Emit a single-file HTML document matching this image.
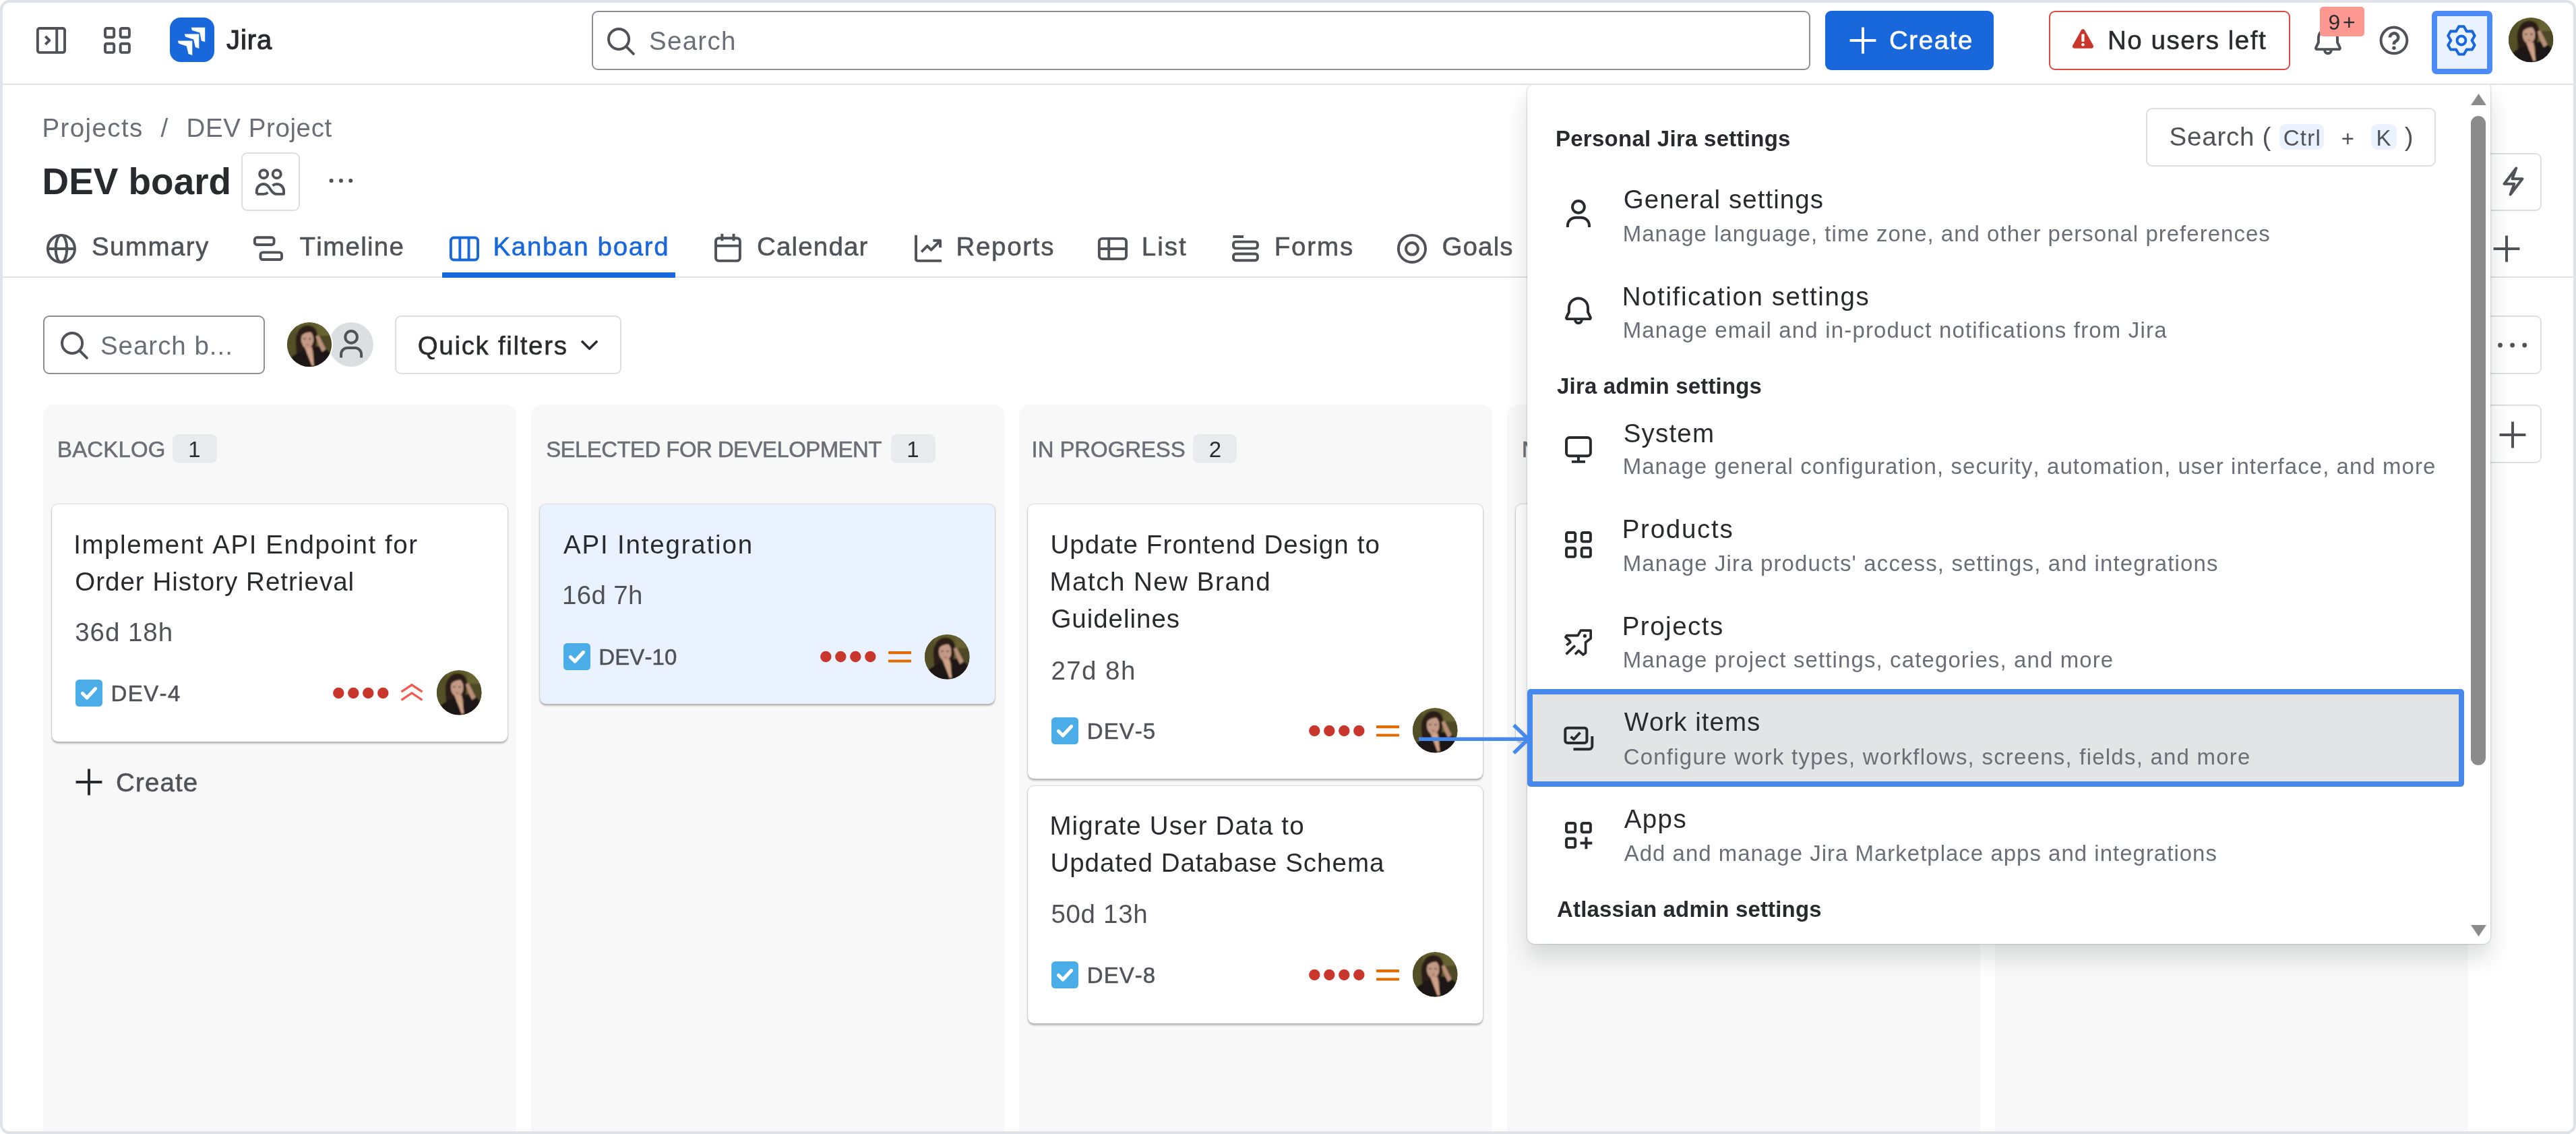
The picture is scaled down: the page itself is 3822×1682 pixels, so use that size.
<!DOCTYPE html>
<html lang="en"><head><meta charset="utf-8"><title>DEV board - Jira</title>
<style>
html,body{margin:0;padding:0;background:#fff;}
body{width:3822px;height:1682px;overflow:hidden;position:relative;font-family:"Liberation Sans",sans-serif;font-kerning:none;}
#page{position:absolute;left:0;top:0;width:3822px;height:1682px;overflow:hidden;filter:blur(.7px);}
#frame{position:absolute;left:0;top:0;width:3822px;height:1682px;box-sizing:border-box;border:4px solid #dfe2e7;border-radius:14px;z-index:100;pointer-events:none;}
.t{position:absolute;white-space:pre;line-height:1;}
.i{position:absolute;overflow:visible;}
</style></head>
<body>
<div id="page">
<header>
<div style="position:absolute;left:4.0px;top:123.5px;width:3814.0px;height:2.5px;background:#e0e2e6;"></div>
<svg class="i" style="left:52.8px;top:36.9px;" width="45.9" height="45.9" viewBox="0 0 16 16" fill="none" stroke="#505258" stroke-width="1.38" stroke-linejoin="round" stroke-linecap="butt"><rect x="1" y="1.75" width="14" height="12.5" rx="1.05"/><path d="M10.9 1.75v12.5"/><path d="M5 5.9L7.1 8 5 10.1"/></svg>
<svg class="i" style="left:150.6px;top:36.9px;" width="45.9" height="45.9" viewBox="0 0 16 16" fill="none" stroke="#505258" stroke-width="1.38" stroke-linejoin="round" stroke-linecap="butt"><rect x="1.75" y="1.75" width="4.6" height="4.6" rx=".8"/><rect x="9.65" y="1.75" width="4.6" height="4.6" rx=".8"/><rect x="1.75" y="9.65" width="4.6" height="4.6" rx=".8"/><rect x="9.65" y="9.65" width="4.6" height="4.6" rx=".8"/></svg>
<div style="position:absolute;left:251.8px;top:25.6px;width:66.0px;height:66.3px;background:#1868db;border-radius:16px;"><svg width="66" height="66" viewBox="0 0 66 66" style="position:absolute;left:0;top:0"><g fill="#fff"><path d="M31.800 14.800H52.200V36.300L46.800 34.500 44.400 22.600 33 19z"/><path d="M21.800 24.400H43.300V45.900L37.900 44.100 35.200 32.600 23 28.600z"/><path d="M11.800 34.400H33.300V55.900L27.600 54 24.800 42.600 13 38.500z"/></g></svg></div>
<span class="t" style="left:336.0px;top:40.4px;font-size:39.95px;letter-spacing:0.95px;color:#292a2e;-webkit-text-stroke:1.1px currentColor;">Jira</span>
<div style="position:absolute;left:877.5px;top:16.0px;width:1808.0px;height:87.5px;border:2.5px solid #8c8f97;border-radius:9px;box-sizing:border-box;background:#fff;"></div>
<svg class="i" style="left:898.1px;top:37.6px;" width="45.9" height="45.9" viewBox="0 0 16 16" fill="none" stroke="#505258" stroke-width="1.38" stroke-linejoin="round" stroke-linecap="butt"><circle cx="7" cy="7" r="5.25"/><path d="M10.9 10.9L14.6 14.6" stroke-linecap="round"/></svg>
<span class="t" style="left:963.0px;top:42.2px;font-size:38.5px;letter-spacing:1.29px;color:#6b6e76;">Search</span>
<div style="position:absolute;left:2708.0px;top:15.5px;width:249.7px;height:88.0px;background:#1868db;border-radius:9px;"></div>
<svg class="i" style="left:2740.5px;top:37.0px;" width="46.0" height="46.0" viewBox="0 0 16 16" fill="none" stroke="#fff" stroke-width="1.38" stroke-linejoin="round" stroke-linecap="butt"><path d="M8 1.25v13.5M1.25 8h13.5"/></svg>
<span class="t" style="left:2803.0px;top:40.5px;font-size:38.5px;letter-spacing:1.57px;color:#fff;-webkit-text-stroke:0.55px currentColor;">Create</span>
<div style="position:absolute;left:3040.0px;top:15.5px;width:357.5px;height:88.0px;border:2.5px solid #e2483d;border-radius:9px;box-sizing:border-box;background:#fff;"></div>
<svg class="i" style="left:3072px;top:40px" width="37" height="36" viewBox="0 0 37 36"><path d="M18.5 3.2c1.1 0 2 .5 2.6 1.5l12.6 22.6c1.1 2-.3 4.4-2.6 4.4H5.9c-2.3 0-3.7-2.4-2.6-4.4L15.900 4.7c.6-1 1.500-1.500 2.600-1.500z" fill="#c9372c"/><rect x="16.4" y="10.5" width="4.2" height="11.500" rx="1" fill="#fff"/><circle cx="18.5" cy="26.200" r="2.300" fill="#fff"/></svg>
<span class="t" style="left:3127.0px;top:40.5px;font-size:38.5px;letter-spacing:1.55px;color:#292a2e;-webkit-text-stroke:0.55px currentColor;">No users left</span>
<svg class="i" style="left:3431.1px;top:38.6px;" width="45.9" height="45.9" viewBox="0 0 16 16" fill="none" stroke="#505258" stroke-width="1.38" stroke-linejoin="round" stroke-linecap="butt"><path d="M2.300 11.900h11.400c.45 0 .7-.5.500-.9L12.900 8.300V6.100a4.900 4.900 0 0 0-9.800 0v2.200L1.800 11c-.2.400.05.9.500.9z"/><path d="M6.300 12.300a1.700 1.700 0 0 0 3.400 0"/></svg>
<div style="position:absolute;left:3441.8px;top:10.0px;width:66.2px;height:43.8px;background:#fd9891;border-radius:5px;"></div>
<span class="t" style="left:3454.6px;top:18.1px;font-size:31.88px;letter-spacing:3.67px;color:#292a2e;">9+</span>
<svg class="i" style="left:3528.7px;top:36.9px;color:#505258;" width="45.9" height="45.9" viewBox="0 0 16 16" fill="none" stroke="#505258" stroke-width="1.38" stroke-linejoin="round" stroke-linecap="butt"><circle cx="8" cy="8" r="6.750"/><path d="M5.900 6.450a2.150 2.150 0 1 1 3.150 1.900c-.7.350-1.050.800-1.050 1.450v.3" stroke-width="1.600"/><circle cx="8" cy="11.900" r=".95" fill="currentColor" stroke="none"/></svg>
<div style="position:absolute;left:3608.0px;top:15.9px;width:89.8px;height:94.1px;background:#e9f2fe;border:8px solid #4c8bf5;border-radius:7px;box-sizing:border-box;"></div>
<svg class="i" style="left:3628.8px;top:37.1px;" width="45.9" height="45.9" viewBox="0 0 16 16" fill="none" stroke="#1868db" stroke-width="1.38" stroke-linejoin="round" stroke-linecap="butt"><path d="M9.33 0.82 L6.67 0.82 L5.28 3.28 L2.45 3.26 L1.12 5.56 L2.55 8.00 L1.12 10.44 L2.45 12.74 L5.27 12.72 L6.67 15.18 L9.33 15.18 L10.73 12.72 L13.55 12.74 L14.88 10.44 L13.45 8.00 L14.88 5.56 L13.55 3.26 L10.72 3.28Z"/><circle cx="8" cy="8" r="2.250"/></svg>
<svg class="i" style="left:3722.0px;top:25.7px;" width="66.3" height="66.3" viewBox="0 0 66 66"><defs><clipPath id="avc1"><circle cx="33" cy="33" r="33"/></clipPath><filter id="avb1" x="-10%" y="-10%" width="120%" height="120%"><feGaussianBlur stdDeviation="1.050"/></filter></defs><g clip-path="url(#avc1)"><rect width="66" height="66" fill="#5f5b2b"/><g filter="url(#avb1)"><path d="M-2 -2h16v70H-2z" fill="#524f27"/><path d="M44 -2h24v40H50z" fill="#686430"/><path d="M46 20h22v30H50z" fill="#4d4a25"/><path d="M13 34C11 14 21 4 32 5c10 1 14 9 12 21l-3 16-27 6z" fill="#2a1f14"/><path d="M2 68l3-15c6-6 14-9 21-12l6 10 6 15 2-29c9-3 18 1 24 9l2 22z" fill="#1c1912"/><path d="M26 37h11l3 27h-3.500z" fill="#d0a189"/><ellipse cx="30" cy="25.500" rx="9.300" ry="13" fill="#c39a85"/><path d="M19.500 21C21 10 34 7 41 16c-6-3-14-2-21.500 5z" fill="#2a1f14"/><path d="M42.500 21l4.500-2 10.500 21-5.500 4-6-12z" fill="#b98f79"/><path d="M39 16c3 3 4 9 3 16l-2.500-1z" fill="#2a1f14"/><path d="M24 24.500h3.500M32 24.500h3.500" stroke="#4a3226" stroke-width="1.600"/><path d="M28.500 33.500h4" stroke="#a8584c" stroke-width="1.500"/></g></g></svg>
</header>
<nav>
<span class="t" style="left:62.5px;top:171.2px;font-size:38.5px;letter-spacing:1.38px;color:#6b6e76;">Projects</span>
<span class="t" style="left:238.5px;top:171.2px;font-size:38.5px;letter-spacing:0.00px;color:#6b6e76;">/</span>
<span class="t" style="left:276.5px;top:171.2px;font-size:38.5px;letter-spacing:0.60px;color:#6b6e76;">DEV Project</span>
<span class="t" style="left:62.5px;top:241.9px;font-size:54.85px;letter-spacing:0.02px;color:#292a2e;font-weight:700;">DEV board</span>
<div style="position:absolute;left:358.0px;top:226.3px;width:86.5px;height:86.7px;border:2.5px solid #dddee1;border-radius:9px;box-sizing:border-box;background:#fff;"></div>
<svg class="i" style="left:378.3px;top:247.1px;" width="45.9" height="45.9" viewBox="0 0 16 16" fill="none" stroke="#505258" stroke-width="1.38" stroke-linejoin="round" stroke-linecap="butt"><circle cx="4.6" cy="3.9" r="2.1"/><circle cx="11.4" cy="3.9" r="2.1"/><path d="M1 14.25v-1.6a3.6 3.6 0 0 1 3.6-3.6c1.6 0 2.4.9 3.4 2.6s1.8 2.6 3.4 2.6H15v-1.6a3.6 3.6 0 0 0-3.6-3.6c-.9 0-1.6.3-2.2.8M1 14.25h3.6c.9 0 1.6-.3 2.2-.8"/></svg>
<svg class="i" style="left:482.8px;top:245.1px;color:#505258;" width="45.9" height="45.9" viewBox="0 0 16 16" fill="none" stroke="#505258" stroke-width="1.38" stroke-linejoin="round" stroke-linecap="butt"><circle cx="3" cy="8" r="1.05" fill="currentColor" stroke="none"/><circle cx="8" cy="8" r="1.05" fill="currentColor" stroke="none"/><circle cx="13" cy="8" r="1.05" fill="currentColor" stroke="none"/></svg>
<div style="position:absolute;left:4.0px;top:409.5px;width:3814.0px;height:2.5px;background:#e0e2e6;"></div>
<svg class="i" style="left:68.1px;top:345.8px;" width="45.9" height="45.9" viewBox="0 0 16 16" fill="none" stroke="#505258" stroke-width="1.38" stroke-linejoin="round" stroke-linecap="butt"><circle cx="8" cy="8" r="7"/><ellipse cx="8" cy="8" rx="2.9" ry="7"/><path d="M1 8h14"/></svg>
<span class="t" style="left:136.0px;top:347.4px;font-size:38.5px;letter-spacing:1.42px;color:#505258;-webkit-text-stroke:0.55px currentColor;">Summary</span>
<svg class="i" style="left:375.1px;top:345.8px;" width="45.9" height="45.9" viewBox="0 0 16 16" fill="none" stroke="#505258" stroke-width="1.38" stroke-linejoin="round" stroke-linecap="butt"><rect x="1" y="2.200" width="10" height="3.700" rx="1.150"/><rect x="4" y="9.900" width="11" height="3.700" rx="1.150"/></svg>
<span class="t" style="left:444.5px;top:347.4px;font-size:38.5px;letter-spacing:1.28px;color:#505258;-webkit-text-stroke:0.55px currentColor;">Timeline</span>
<svg class="i" style="left:666.1px;top:345.8px;" width="45.9" height="45.9" viewBox="0 0 16 16" fill="none" stroke="#1868db" stroke-width="1.38" stroke-linejoin="round" stroke-linecap="butt"><rect x="1" y="2.25" width="14" height="11.5" rx="1.6"/><path d="M5.7 2.25v11.5M10.3 2.25v11.5"/></svg>
<span class="t" style="left:731.5px;top:347.4px;font-size:38.5px;letter-spacing:1.66px;color:#1868db;-webkit-text-stroke:0.55px currentColor;">Kanban board</span>
<svg class="i" style="left:1056.5px;top:345.8px;" width="45.9" height="45.9" viewBox="0 0 16 16" fill="none" stroke="#505258" stroke-width="1.38" stroke-linejoin="round" stroke-linecap="butt"><rect x="1.75" y="2.500" width="12.5" height="11.750" rx="1.600"/><path d="M1.750 6.500h12.5M5 .3v3.600M11 .3v3.600"/></svg>
<span class="t" style="left:1123.0px;top:347.4px;font-size:38.5px;letter-spacing:1.17px;color:#505258;-webkit-text-stroke:0.55px currentColor;">Calendar</span>
<svg class="i" style="left:1353.9px;top:345.8px;" width="45.9" height="45.9" viewBox="0 0 16 16" fill="none" stroke="#505258" stroke-width="1.38" stroke-linejoin="round" stroke-linecap="butt"><path d="M1.75 1v12.4c0 .5.4.85.85.85H15"/><path d="M4.6 9.6l3-3 2 2 4.6-4.6"/><path d="M10.6 3.75h3.7v3.7"/></svg>
<span class="t" style="left:1418.4px;top:347.4px;font-size:38.5px;letter-spacing:1.72px;color:#505258;-webkit-text-stroke:0.55px currentColor;">Reports</span>
<svg class="i" style="left:1627.9px;top:345.8px;" width="45.9" height="45.9" viewBox="0 0 16 16" fill="none" stroke="#505258" stroke-width="1.38" stroke-linejoin="round" stroke-linecap="butt"><rect x="1" y="2.75" width="14" height="10.5" rx="1.6"/><path d="M1 8h14M6 2.75v10.5"/></svg>
<span class="t" style="left:1693.8px;top:347.4px;font-size:38.5px;letter-spacing:1.99px;color:#505258;-webkit-text-stroke:0.55px currentColor;">List</span>
<svg class="i" style="left:1825.3px;top:345.8px;" width="45.9" height="45.9" viewBox="0 0 16 16" fill="none" stroke="#505258" stroke-width="1.38" stroke-linejoin="round" stroke-linecap="butt"><path d="M1.5 1.75h5.5"/><rect x="1.75" y="4.4" width="12.5" height="3.4" rx="1.2"/><rect x="1.75" y="10.6" width="12.5" height="3.4" rx="1.2"/></svg>
<span class="t" style="left:1890.7px;top:347.4px;font-size:38.5px;letter-spacing:1.87px;color:#505258;-webkit-text-stroke:0.55px currentColor;">Forms</span>
<svg class="i" style="left:2071.5px;top:345.8px;" width="45.9" height="45.9" viewBox="0 0 16 16" fill="none" stroke="#505258" stroke-width="1.38" stroke-linejoin="round" stroke-linecap="butt"><circle cx="8" cy="8" r="7"/><circle cx="8" cy="8" r="3.1"/></svg>
<span class="t" style="left:2139.5px;top:347.4px;font-size:38.5px;letter-spacing:1.12px;color:#505258;-webkit-text-stroke:0.55px currentColor;">Goals</span>
<div style="position:absolute;left:656.4px;top:404.0px;width:345.6px;height:8.0px;background:#1868db;border-radius:1px;"></div>
<div style="position:absolute;left:3650.0px;top:226.8px;width:121.0px;height:86.2px;border:2.5px solid #dddee1;border-radius:9px;box-sizing:border-box;background:#fff;"></div>
<svg class="i" style="left:3706.1px;top:246.1px;" width="45.9" height="45.9" viewBox="0 0 16 16" fill="none" stroke="#505258" stroke-width="1.38" stroke-linejoin="round" stroke-linecap="butt"><path d="M9.500 1.200L3.300 9.300h5.200L6.500 14.800l6.200-8.100H7.500z"/></svg>
<svg class="i" style="left:3695.7px;top:346.0px;" width="46.0" height="46.0" viewBox="0 0 16 16" fill="none" stroke="#505258" stroke-width="1.38" stroke-linejoin="round" stroke-linecap="butt"><path d="M8 1.25v13.5M1.25 8h13.5"/></svg>
<div style="position:absolute;left:3650.0px;top:468.0px;width:121.0px;height:87.0px;border:2.5px solid #dddee1;border-radius:9px;box-sizing:border-box;background:#fff;"></div>
<svg class="i" style="left:3700px;top:502px" width="56" height="20" viewBox="0 0 56 20" fill="#505258"><circle cx="9.500" cy="10" r="3.400"/><circle cx="27.600" cy="10" r="3.400"/><circle cx="45.700" cy="10" r="3.400"/></svg>
<div style="position:absolute;left:3650.0px;top:600.0px;width:121.0px;height:87.0px;border:2.5px solid #dddee1;border-radius:9px;box-sizing:border-box;background:#fff;"></div>
<svg class="i" style="left:3705.0px;top:621.8px;" width="46.0" height="46.0" viewBox="0 0 16 16" fill="none" stroke="#505258" stroke-width="1.38" stroke-linejoin="round" stroke-linecap="butt"><path d="M8 1.25v13.5M1.25 8h13.5"/></svg>
</nav>
<main>
<div style="position:absolute;left:64.3px;top:468.0px;width:328.9px;height:87.3px;border:2.5px solid #8c8f97;border-radius:9px;box-sizing:border-box;background:#fff;"></div>
<svg class="i" style="left:87.1px;top:488.6px;" width="45.9" height="45.9" viewBox="0 0 16 16" fill="none" stroke="#505258" stroke-width="1.38" stroke-linejoin="round" stroke-linecap="butt"><circle cx="7" cy="7" r="5.25"/><path d="M10.9 10.9L14.6 14.6" stroke-linecap="round"/></svg>
<span class="t" style="left:148.9px;top:494.2px;font-size:38.5px;letter-spacing:0.98px;color:#6b6e76;">Search b...</span>
<div style="position:absolute;left:423.6px;top:475.6px;width:70.8px;height:70.8px;background:#fff;border-radius:50%;z-index:1;"></div>
<svg class="i" style="left:426.0px;top:478.0px;z-index:2;" width="66" height="66" viewBox="0 0 66 66"><defs><clipPath id="avc2"><circle cx="33" cy="33" r="33"/></clipPath><filter id="avb2" x="-10%" y="-10%" width="120%" height="120%"><feGaussianBlur stdDeviation="1.050"/></filter></defs><g clip-path="url(#avc2)"><rect width="66" height="66" fill="#5f5b2b"/><g filter="url(#avb2)"><path d="M-2 -2h16v70H-2z" fill="#524f27"/><path d="M44 -2h24v40H50z" fill="#686430"/><path d="M46 20h22v30H50z" fill="#4d4a25"/><path d="M13 34C11 14 21 4 32 5c10 1 14 9 12 21l-3 16-27 6z" fill="#2a1f14"/><path d="M2 68l3-15c6-6 14-9 21-12l6 10 6 15 2-29c9-3 18 1 24 9l2 22z" fill="#1c1912"/><path d="M26 37h11l3 27h-3.500z" fill="#d0a189"/><ellipse cx="30" cy="25.500" rx="9.300" ry="13" fill="#c39a85"/><path d="M19.500 21C21 10 34 7 41 16c-6-3-14-2-21.500 5z" fill="#2a1f14"/><path d="M42.500 21l4.500-2 10.500 21-5.500 4-6-12z" fill="#b98f79"/><path d="M39 16c3 3 4 9 3 16l-2.500-1z" fill="#2a1f14"/><path d="M24 24.500h3.500M32 24.500h3.500" stroke="#4a3226" stroke-width="1.600"/><path d="M28.500 33.500h4" stroke="#a8584c" stroke-width="1.500"/></g></g></svg>
<svg class="i" style="left:487.9px;top:478px" width="66" height="66" viewBox="0 0 66 66"><circle cx="33" cy="33" r="33" fill="#dddee1"/><g fill="none" stroke="#505258" stroke-width="4"><circle cx="33.100" cy="21.900" r="8.800"/><path d="M18.100 52.500v-5a9.500 9.500 0 0 1 9.500-9.500h11a9.500 9.500 0 0 1 9.500 9.500v5"/></g></svg>
<div style="position:absolute;left:586.0px;top:468.0px;width:336.4px;height:87.3px;border:2.5px solid #dddee1;border-radius:9px;box-sizing:border-box;background:#fff;"></div>
<span class="t" style="left:619.7px;top:494.2px;font-size:38.5px;letter-spacing:1.68px;color:#292a2e;-webkit-text-stroke:0.55px currentColor;">Quick filters</span>
<svg class="i" style="left:854.1px;top:490.9px;" width="41.1" height="41.1" viewBox="0 0 16 16" fill="none" stroke="#292a2e" stroke-width="1.38" stroke-linejoin="round" stroke-linecap="butt"><path d="M3.5 5.75L8 10.25l4.5-4.5"/></svg>
<div style="position:absolute;left:64.3px;top:600.0px;width:701.6px;height:1100.0px;background:#f8f8f8;border-radius:16px;"></div>
<span class="t" style="left:85.0px;top:650.5px;font-size:32.96px;letter-spacing:0.18px;color:#6b6e76;-webkit-text-stroke:0.55px currentColor;">BACKLOG</span>
<div style="position:absolute;left:256.0px;top:644.0px;width:65.5px;height:43.3px;background:#e9eaed;border-radius:9px;"></div>
<span class="t" style="left:279.2px;top:650.5px;font-size:32.96px;letter-spacing:0.00px;color:#292a2e;">1</span>
<div style="position:absolute;left:788.0px;top:600.0px;width:701.6px;height:1100.0px;background:#f8f8f8;border-radius:16px;"></div>
<span class="t" style="left:810.2px;top:650.5px;font-size:32.96px;letter-spacing:-0.55px;color:#6b6e76;-webkit-text-stroke:0.55px currentColor;">SELECTED FOR DEVELOPMENT</span>
<div style="position:absolute;left:1322.0px;top:644.0px;width:65.5px;height:43.3px;background:#e9eaed;border-radius:9px;"></div>
<span class="t" style="left:1345.2px;top:650.5px;font-size:32.96px;letter-spacing:0.00px;color:#292a2e;">1</span>
<div style="position:absolute;left:1512.0px;top:600.0px;width:701.6px;height:1100.0px;background:#f8f8f8;border-radius:16px;"></div>
<span class="t" style="left:1530.6px;top:650.5px;font-size:32.96px;letter-spacing:-0.08px;color:#6b6e76;-webkit-text-stroke:0.55px currentColor;">IN PROGRESS</span>
<div style="position:absolute;left:1770.0px;top:644.0px;width:65.3px;height:43.3px;background:#e9eaed;border-radius:9px;"></div>
<span class="t" style="left:1793.7px;top:650.5px;font-size:32.96px;letter-spacing:0.00px;color:#292a2e;">2</span>
<div style="position:absolute;left:2236.0px;top:600.0px;width:701.6px;height:1100.0px;background:#f8f8f8;border-radius:16px;"></div>
<span class="t" style="left:2258.0px;top:650.5px;font-size:32.96px;letter-spacing:0.13px;color:#6b6e76;-webkit-text-stroke:0.55px currentColor;">NEEDS REVIEW</span>
<div style="position:absolute;left:2526.0px;top:644.0px;width:65.0px;height:43.3px;background:#e9eaed;border-radius:9px;"></div>
<span class="t" style="left:2549.0px;top:650.5px;font-size:32.96px;letter-spacing:0.00px;color:#292a2e;">1</span>
<div style="position:absolute;left:2959.6px;top:600.0px;width:701.6px;height:1100.0px;background:#f8f8f8;border-radius:16px;"></div>
<span class="t" style="left:2980.0px;top:650.5px;font-size:32.96px;letter-spacing:2.59px;color:#6b6e76;-webkit-text-stroke:0.55px currentColor;">DONE</span>
<div style="position:absolute;left:3096.0px;top:644.0px;width:65.0px;height:43.3px;background:#e9eaed;border-radius:9px;"></div>
<span class="t" style="left:3119.0px;top:650.5px;font-size:32.96px;letter-spacing:0.00px;color:#292a2e;">0</span>
<div style="position:absolute;left:77.0px;top:747.7px;width:675.7px;height:352.6px;background:#fff;border-radius:9px;box-shadow:0 2.5px 2.5px rgba(30,31,33,.25),0 0 2.5px rgba(30,31,33,.31);"></div><span class="t" style="left:109.2px;top:788.6px;font-size:38.5px;letter-spacing:1.56px;color:#292a2e;">Implement API Endpoint for</span><span class="t" style="left:111.2px;top:844.0px;font-size:38.5px;letter-spacing:1.02px;color:#292a2e;">Order History Retrieval</span><span class="t" style="left:111.2px;top:918.6px;font-size:38.5px;letter-spacing:0.96px;color:#505258;">36d 18h</span><svg class="i" style="left:112.2px;top:1007.6px" width="40" height="40" viewBox="0 0 40 40"><rect width="40" height="40" rx="5.500" fill="#4bade8"/><path d="M10.500 20.500l6.500 6.500 12.500-13.500" fill="none" stroke="#fff" stroke-width="5.200" stroke-linecap="round" stroke-linejoin="round"/></svg><span class="t" style="left:164.6px;top:1012.9px;font-size:32.96px;letter-spacing:1.42px;color:#505258;-webkit-text-stroke:0.55px currentColor;">DEV-4</span><svg class="i" style="left:493.6px;top:1018.6px" width="86" height="18" viewBox="0 0 86 18" fill="#c9372c"><circle cx="8.3" cy="9" r="8.200"/><circle cx="30.3" cy="9" r="8.200"/><circle cx="52.3" cy="9" r="8.200"/><circle cx="74.3" cy="9" r="8.200"/></svg><svg class="i" style="left:593.5px;top:1011.6px" width="34" height="32" viewBox="0 0 34 32" fill="none" stroke="#f15b50" stroke-width="3.300" stroke-linejoin="miter"><path d="M1.500 14.200L17 3.800l15.500 10.400"/><path d="M1.500 26.400L17 16l15.500 10.400"/></svg><svg class="i" style="left:648.0px;top:994.4px;" width="66.5" height="66.5" viewBox="0 0 66 66"><defs><clipPath id="avc3"><circle cx="33" cy="33" r="33"/></clipPath><filter id="avb3" x="-10%" y="-10%" width="120%" height="120%"><feGaussianBlur stdDeviation="1.050"/></filter></defs><g clip-path="url(#avc3)"><rect width="66" height="66" fill="#5f5b2b"/><g filter="url(#avb3)"><path d="M-2 -2h16v70H-2z" fill="#524f27"/><path d="M44 -2h24v40H50z" fill="#686430"/><path d="M46 20h22v30H50z" fill="#4d4a25"/><path d="M13 34C11 14 21 4 32 5c10 1 14 9 12 21l-3 16-27 6z" fill="#2a1f14"/><path d="M2 68l3-15c6-6 14-9 21-12l6 10 6 15 2-29c9-3 18 1 24 9l2 22z" fill="#1c1912"/><path d="M26 37h11l3 27h-3.500z" fill="#d0a189"/><ellipse cx="30" cy="25.500" rx="9.300" ry="13" fill="#c39a85"/><path d="M19.500 21C21 10 34 7 41 16c-6-3-14-2-21.500 5z" fill="#2a1f14"/><path d="M42.500 21l4.500-2 10.500 21-5.500 4-6-12z" fill="#b98f79"/><path d="M39 16c3 3 4 9 3 16l-2.500-1z" fill="#2a1f14"/><path d="M24 24.500h3.500M32 24.500h3.500" stroke="#4a3226" stroke-width="1.600"/><path d="M28.500 33.500h4" stroke="#a8584c" stroke-width="1.500"/></g></g></svg>
<svg class="i" style="left:109.0px;top:1136.6px;" width="46.0" height="46.0" viewBox="0 0 16 16" fill="none" stroke="#292a2e" stroke-width="1.38" stroke-linejoin="round" stroke-linecap="butt"><path d="M8 1.25v13.5M1.25 8h13.5"/></svg>
<span class="t" style="left:172.0px;top:1141.7px;font-size:38.5px;letter-spacing:1.13px;color:#505258;-webkit-text-stroke:0.55px currentColor;">Create</span>
<div style="position:absolute;left:800.7px;top:747.7px;width:675.1px;height:296.7px;background:#e9f2fe;border-radius:9px;box-shadow:0 2.5px 2.5px rgba(30,31,33,.25),0 0 2.5px rgba(30,31,33,.31);"></div><span class="t" style="left:835.9px;top:788.6px;font-size:38.5px;letter-spacing:1.82px;color:#292a2e;">API Integration</span><span class="t" style="left:833.9px;top:864.2px;font-size:38.5px;letter-spacing:0.35px;color:#505258;">16d 7h</span><svg class="i" style="left:835.9px;top:954.0px" width="40" height="40" viewBox="0 0 40 40"><rect width="40" height="40" rx="5.500" fill="#4bade8"/><path d="M10.500 20.500l6.500 6.500 12.500-13.500" fill="none" stroke="#fff" stroke-width="5.200" stroke-linecap="round" stroke-linejoin="round"/></svg><span class="t" style="left:888.3px;top:959.3px;font-size:32.96px;letter-spacing:0.13px;color:#505258;-webkit-text-stroke:0.55px currentColor;">DEV-10</span><svg class="i" style="left:1217.3px;top:965.0px" width="86" height="18" viewBox="0 0 86 18" fill="#c9372c"><circle cx="8.3" cy="9" r="8.200"/><circle cx="30.3" cy="9" r="8.200"/><circle cx="52.3" cy="9" r="8.200"/><circle cx="74.3" cy="9" r="8.200"/></svg><svg class="i" style="left:1317.5px;top:963.0px" width="34" height="22" viewBox="0 0 34 22" fill="#e06c00"><rect x="0" y="3.100" width="34" height="4.200" rx=".8"/><rect x="0" y="15.400" width="34" height="4.200" rx=".8"/></svg><svg class="i" style="left:1371.7px;top:940.8px;" width="66.5" height="66.5" viewBox="0 0 66 66"><defs><clipPath id="avc4"><circle cx="33" cy="33" r="33"/></clipPath><filter id="avb4" x="-10%" y="-10%" width="120%" height="120%"><feGaussianBlur stdDeviation="1.050"/></filter></defs><g clip-path="url(#avc4)"><rect width="66" height="66" fill="#5f5b2b"/><g filter="url(#avb4)"><path d="M-2 -2h16v70H-2z" fill="#524f27"/><path d="M44 -2h24v40H50z" fill="#686430"/><path d="M46 20h22v30H50z" fill="#4d4a25"/><path d="M13 34C11 14 21 4 32 5c10 1 14 9 12 21l-3 16-27 6z" fill="#2a1f14"/><path d="M2 68l3-15c6-6 14-9 21-12l6 10 6 15 2-29c9-3 18 1 24 9l2 22z" fill="#1c1912"/><path d="M26 37h11l3 27h-3.500z" fill="#d0a189"/><ellipse cx="30" cy="25.500" rx="9.300" ry="13" fill="#c39a85"/><path d="M19.500 21C21 10 34 7 41 16c-6-3-14-2-21.500 5z" fill="#2a1f14"/><path d="M42.500 21l4.500-2 10.500 21-5.500 4-6-12z" fill="#b98f79"/><path d="M39 16c3 3 4 9 3 16l-2.500-1z" fill="#2a1f14"/><path d="M24 24.500h3.500M32 24.500h3.500" stroke="#4a3226" stroke-width="1.600"/><path d="M28.500 33.500h4" stroke="#a8584c" stroke-width="1.500"/></g></g></svg>
<div style="position:absolute;left:1525.2px;top:747.7px;width:674.6px;height:407.0px;background:#fff;border-radius:9px;box-shadow:0 2.5px 2.5px rgba(30,31,33,.25),0 0 2.5px rgba(30,31,33,.31);"></div><span class="t" style="left:1558.4px;top:788.6px;font-size:38.5px;letter-spacing:1.09px;color:#292a2e;">Update Frontend Design to</span><span class="t" style="left:1557.4px;top:844.0px;font-size:38.5px;letter-spacing:1.52px;color:#292a2e;">Match New Brand</span><span class="t" style="left:1559.4px;top:898.7px;font-size:38.5px;letter-spacing:0.97px;color:#292a2e;">Guidelines</span><span class="t" style="left:1559.4px;top:975.5px;font-size:38.5px;letter-spacing:1.45px;color:#505258;">27d 8h</span><svg class="i" style="left:1560.4px;top:1063.5px" width="40" height="40" viewBox="0 0 40 40"><rect width="40" height="40" rx="5.500" fill="#4bade8"/><path d="M10.500 20.500l6.500 6.500 12.500-13.500" fill="none" stroke="#fff" stroke-width="5.200" stroke-linecap="round" stroke-linejoin="round"/></svg><span class="t" style="left:1612.8px;top:1068.8px;font-size:32.96px;letter-spacing:1.04px;color:#505258;-webkit-text-stroke:0.55px currentColor;">DEV-5</span><svg class="i" style="left:1941.8px;top:1074.5px" width="86" height="18" viewBox="0 0 86 18" fill="#c9372c"><circle cx="8.3" cy="9" r="8.200"/><circle cx="30.3" cy="9" r="8.200"/><circle cx="52.3" cy="9" r="8.200"/><circle cx="74.3" cy="9" r="8.200"/></svg><svg class="i" style="left:2042.0px;top:1072.5px" width="34" height="22" viewBox="0 0 34 22" fill="#e06c00"><rect x="0" y="3.100" width="34" height="4.200" rx=".8"/><rect x="0" y="15.400" width="34" height="4.200" rx=".8"/></svg><svg class="i" style="left:2096.2px;top:1050.3px;" width="66.5" height="66.5" viewBox="0 0 66 66"><defs><clipPath id="avc5"><circle cx="33" cy="33" r="33"/></clipPath><filter id="avb5" x="-10%" y="-10%" width="120%" height="120%"><feGaussianBlur stdDeviation="1.050"/></filter></defs><g clip-path="url(#avc5)"><rect width="66" height="66" fill="#5f5b2b"/><g filter="url(#avb5)"><path d="M-2 -2h16v70H-2z" fill="#524f27"/><path d="M44 -2h24v40H50z" fill="#686430"/><path d="M46 20h22v30H50z" fill="#4d4a25"/><path d="M13 34C11 14 21 4 32 5c10 1 14 9 12 21l-3 16-27 6z" fill="#2a1f14"/><path d="M2 68l3-15c6-6 14-9 21-12l6 10 6 15 2-29c9-3 18 1 24 9l2 22z" fill="#1c1912"/><path d="M26 37h11l3 27h-3.500z" fill="#d0a189"/><ellipse cx="30" cy="25.500" rx="9.300" ry="13" fill="#c39a85"/><path d="M19.500 21C21 10 34 7 41 16c-6-3-14-2-21.500 5z" fill="#2a1f14"/><path d="M42.500 21l4.500-2 10.500 21-5.500 4-6-12z" fill="#b98f79"/><path d="M39 16c3 3 4 9 3 16l-2.500-1z" fill="#2a1f14"/><path d="M24 24.500h3.500M32 24.500h3.500" stroke="#4a3226" stroke-width="1.600"/><path d="M28.500 33.500h4" stroke="#a8584c" stroke-width="1.500"/></g></g></svg>
<div style="position:absolute;left:1525.2px;top:1166.0px;width:674.6px;height:351.6px;background:#fff;border-radius:9px;box-shadow:0 2.5px 2.5px rgba(30,31,33,.25),0 0 2.5px rgba(30,31,33,.31);"></div><span class="t" style="left:1557.4px;top:1206.0px;font-size:38.5px;letter-spacing:1.16px;color:#292a2e;">Migrate User Data to</span><span class="t" style="left:1558.4px;top:1261.4px;font-size:38.5px;letter-spacing:1.00px;color:#292a2e;">Updated Database Schema</span><span class="t" style="left:1559.4px;top:1337.0px;font-size:38.5px;letter-spacing:0.69px;color:#505258;">50d 13h</span><svg class="i" style="left:1560.4px;top:1425.5px" width="40" height="40" viewBox="0 0 40 40"><rect width="40" height="40" rx="5.500" fill="#4bade8"/><path d="M10.500 20.500l6.500 6.500 12.500-13.500" fill="none" stroke="#fff" stroke-width="5.200" stroke-linecap="round" stroke-linejoin="round"/></svg><span class="t" style="left:1612.8px;top:1430.8px;font-size:32.96px;letter-spacing:1.04px;color:#505258;-webkit-text-stroke:0.55px currentColor;">DEV-8</span><svg class="i" style="left:1941.8px;top:1436.5px" width="86" height="18" viewBox="0 0 86 18" fill="#c9372c"><circle cx="8.3" cy="9" r="8.200"/><circle cx="30.3" cy="9" r="8.200"/><circle cx="52.3" cy="9" r="8.200"/><circle cx="74.3" cy="9" r="8.200"/></svg><svg class="i" style="left:2042.0px;top:1434.5px" width="34" height="22" viewBox="0 0 34 22" fill="#e06c00"><rect x="0" y="3.100" width="34" height="4.200" rx=".8"/><rect x="0" y="15.400" width="34" height="4.200" rx=".8"/></svg><svg class="i" style="left:2096.2px;top:1412.3px;" width="66.5" height="66.5" viewBox="0 0 66 66"><defs><clipPath id="avc6"><circle cx="33" cy="33" r="33"/></clipPath><filter id="avb6" x="-10%" y="-10%" width="120%" height="120%"><feGaussianBlur stdDeviation="1.050"/></filter></defs><g clip-path="url(#avc6)"><rect width="66" height="66" fill="#5f5b2b"/><g filter="url(#avb6)"><path d="M-2 -2h16v70H-2z" fill="#524f27"/><path d="M44 -2h24v40H50z" fill="#686430"/><path d="M46 20h22v30H50z" fill="#4d4a25"/><path d="M13 34C11 14 21 4 32 5c10 1 14 9 12 21l-3 16-27 6z" fill="#2a1f14"/><path d="M2 68l3-15c6-6 14-9 21-12l6 10 6 15 2-29c9-3 18 1 24 9l2 22z" fill="#1c1912"/><path d="M26 37h11l3 27h-3.500z" fill="#d0a189"/><ellipse cx="30" cy="25.500" rx="9.300" ry="13" fill="#c39a85"/><path d="M19.500 21C21 10 34 7 41 16c-6-3-14-2-21.500 5z" fill="#2a1f14"/><path d="M42.500 21l4.500-2 10.500 21-5.500 4-6-12z" fill="#b98f79"/><path d="M39 16c3 3 4 9 3 16l-2.500-1z" fill="#2a1f14"/><path d="M24 24.500h3.500M32 24.500h3.500" stroke="#4a3226" stroke-width="1.600"/><path d="M28.500 33.500h4" stroke="#a8584c" stroke-width="1.500"/></g></g></svg>
<div style="position:absolute;left:2249.0px;top:747.7px;width:674.0px;height:352.3px;background:#fff;border-radius:9px;box-shadow:0 2.5px 2.5px rgba(30,31,33,.25),0 0 2.5px rgba(30,31,33,.31);"></div>
<svg class="i" style="left:2100px;top:1066px;z-index:30" width="180" height="60" viewBox="0 0 180 60" fill="none" stroke="#4688ec" stroke-width="5.500"><path d="M5 30.300h161"/><path d="M146 9.500l21.500 20.800L146 51" stroke-linejoin="miter"/></svg>
</main>
<aside role="menu" style="position:absolute;left:2165px;top:126px;width:1657px;height:1556px;overflow:hidden;z-index:20;"><div style="position:absolute;left:100.5px;top:-1.0px;width:1429.7px;height:1274.5px;background:#fff;border-radius:11px 4px 11px 11px;box-shadow:0 21px 32px rgba(30,31,33,.15),0 0 3px rgba(30,31,33,.31);overflow:hidden;"><span class="t" style="left:42.5px;top:64.5px;font-size:32.96px;letter-spacing:0.28px;color:#292a2e;font-weight:700;">Personal Jira settings</span><div style="position:absolute;left:918.9px;top:35.3px;width:429.4px;height:86.7px;border:2.5px solid #dddee1;border-radius:9px;box-sizing:border-box;background:#fff;"></div><span class="t" style="left:953.1px;top:58.9px;font-size:38.5px;letter-spacing:0.76px;color:#505258;">Search (</span><div style="position:absolute;left:1116.5px;top:58.9px;width:65.7px;height:37.9px;background:#e9f2fe;border-radius:9px;"></div><span class="t" style="left:1122.3px;top:63.6px;font-size:32.96px;letter-spacing:1.22px;color:#505258;">Ctrl</span><span class="t" style="left:1208.2px;top:65.2px;font-size:32.96px;letter-spacing:0.00px;color:#505258;">+</span><div style="position:absolute;left:1252.7px;top:58.9px;width:37.5px;height:37.9px;background:#e9f2fe;border-radius:9px;"></div><span class="t" style="left:1259.9px;top:63.6px;font-size:32.96px;letter-spacing:0.00px;color:#505258;">K</span><span class="t" style="left:1302.3px;top:58.9px;font-size:38.5px;letter-spacing:0.00px;color:#505258;">)</span><div style="position:absolute;left:0.1px;top:897.0px;width:1390.4px;height:145.0px;background:#e3e4e6;border:8px solid #4688ec;border-radius:5px;box-sizing:border-box;"></div><svg class="i" style="left:53.3px;top:168.9px;color:#292a2e;" width="45.9" height="45.9" viewBox="0 0 16 16" fill="none" stroke="#292a2e" stroke-width="1.38" stroke-linejoin="round" stroke-linecap="butt"><circle cx="8" cy="4.500" r="3.100"/><path d="M2.400 15v-.8a4.200 4.200 0 0 1 4.200-4.200h2.800a4.200 4.200 0 0 1 4.200 4.200v.8"/></svg><span class="t" style="left:143.2px;top:152.2px;font-size:38.5px;letter-spacing:1.07px;color:#292a2e;">General settings</span><span class="t" style="left:142.2px;top:205.7px;font-size:32.96px;letter-spacing:1.03px;color:#6b6e76;">Manage language, time zone, and other personal preferences</span><svg class="i" style="left:53.3px;top:313.9px;color:#292a2e;" width="45.9" height="45.9" viewBox="0 0 16 16" fill="none" stroke="#292a2e" stroke-width="1.38" stroke-linejoin="round" stroke-linecap="butt"><path d="M2.300 11.900h11.400c.45 0 .7-.5.500-.9L12.900 8.300V6.100a4.900 4.900 0 0 0-9.800 0v2.200L1.800 11c-.2.400.05.9.500.9z"/><path d="M6.300 12.300a1.700 1.700 0 0 0 3.400 0"/></svg><span class="t" style="left:141.2px;top:295.7px;font-size:38.5px;letter-spacing:1.61px;color:#292a2e;">Notification settings</span><span class="t" style="left:142.2px;top:349.3px;font-size:32.96px;letter-spacing:1.19px;color:#6b6e76;">Manage email and in-product notifications from Jira</span><svg class="i" style="left:53.3px;top:518.5px;color:#292a2e;" width="45.9" height="45.9" viewBox="0 0 16 16" fill="none" stroke="#292a2e" stroke-width="1.38" stroke-linejoin="round" stroke-linecap="butt"><rect x="1.75" y="1.75" width="12.5" height="9.5" rx="1.6"/><path d="M8 11.25v3M4.5 14.25h7"/></svg><span class="t" style="left:143.2px;top:498.5px;font-size:38.5px;letter-spacing:1.20px;color:#292a2e;">System</span><span class="t" style="left:142.2px;top:551.3px;font-size:32.96px;letter-spacing:1.08px;color:#6b6e76;">Manage general configuration, security, automation, user interface, and more</span><svg class="i" style="left:53.3px;top:660.1px;color:#292a2e;" width="45.9" height="45.9" viewBox="0 0 16 16" fill="none" stroke="#292a2e" stroke-width="1.38" stroke-linejoin="round" stroke-linecap="butt"><rect x="1.75" y="1.75" width="4.6" height="4.6" rx=".8"/><rect x="9.65" y="1.75" width="4.6" height="4.6" rx=".8"/><rect x="1.75" y="9.65" width="4.6" height="4.6" rx=".8"/><rect x="9.65" y="9.65" width="4.6" height="4.6" rx=".8"/></svg><span class="t" style="left:141.2px;top:641.2px;font-size:38.5px;letter-spacing:1.72px;color:#292a2e;">Products</span><span class="t" style="left:142.2px;top:694.9px;font-size:32.96px;letter-spacing:1.15px;color:#6b6e76;">Manage Jira products' access, settings, and integrations</span><svg class="i" style="left:53.3px;top:803.6px;color:#292a2e;" width="45.9" height="45.9" viewBox="0 0 16 16" fill="none" stroke="#292a2e" stroke-width="1.38" stroke-linejoin="round" stroke-linecap="butt"><g stroke-width="1.280"><path d="M6.250 14.450L8.100 12.600l2.350 2.100 1.250-1V8.300l2.650-2V2.150H9.200L7.700 4.750H1.900l-.55.850 1.950 1.700.500 1-2 1.500"/><path d="M1.600 14.450L6.250 10"/></g><circle cx="11.300" cy="4.950" r=".9" fill="currentColor" stroke="none"/></svg><span class="t" style="left:141.2px;top:784.5px;font-size:38.5px;letter-spacing:1.50px;color:#292a2e;">Projects</span><span class="t" style="left:142.2px;top:838.2px;font-size:32.96px;letter-spacing:1.13px;color:#6b6e76;">Manage project settings, categories, and more</span><svg class="i" style="left:53.3px;top:947.1px;color:#292a2e;" width="45.9" height="45.9" viewBox="0 0 16 16" fill="none" stroke="#292a2e" stroke-width="1.38" stroke-linejoin="round" stroke-linecap="butt"><rect x="1.150" y="2.700" width="11.200" height="7.750" rx="1.200"/><path d="M4.050 7.200l1.600 1.350L8.850 5.100" stroke-width="1.350"/><path d="M15.100 6.950v5.100c0 .9-.7 1.600-1.600 1.600H5.400"/></svg><span class="t" style="left:144.2px;top:926.5px;font-size:38.5px;letter-spacing:1.01px;color:#292a2e;">Work items</span><span class="t" style="left:143.2px;top:981.7px;font-size:32.96px;letter-spacing:1.24px;color:#6b6e76;">Configure work types, workflows, screens, fields, and more</span><svg class="i" style="left:53.3px;top:1090.6px;color:#292a2e;" width="45.9" height="45.9" viewBox="0 0 16 16" fill="none" stroke="#292a2e" stroke-width="1.38" stroke-linejoin="round" stroke-linecap="butt"><rect x="1.75" y="1.75" width="4.6" height="4.6" rx=".8"/><rect x="9.65" y="1.75" width="4.6" height="4.6" rx=".8"/><rect x="1.75" y="9.65" width="4.6" height="4.6" rx=".8"/><path d="M12 8.9v6.2M8.9 12h6.2"/></svg><span class="t" style="left:144.2px;top:1070.6px;font-size:38.5px;letter-spacing:1.40px;color:#292a2e;">Apps</span><span class="t" style="left:144.2px;top:1125.2px;font-size:32.96px;letter-spacing:1.02px;color:#6b6e76;">Add and manage Jira Marketplace apps and integrations</span><span class="t" style="left:44.5px;top:432.2px;font-size:32.96px;letter-spacing:0.20px;color:#292a2e;font-weight:700;">Jira admin settings</span><span class="t" style="left:44.5px;top:1207.9px;font-size:32.96px;letter-spacing:0.19px;color:#292a2e;font-weight:700;">Atlassian admin settings</span><div style="position:absolute;left:1399.2px;top:0.0px;width:30.5px;height:1274.5px;background:#fff;border-radius:0 10px 10px 0;"></div><div style="position:absolute;left:1400.5px;top:46.5px;width:22.0px;height:963.5px;background:#8b8b8b;border-radius:11px;"></div><svg class="i" style="left:1399.5px;top:12.5px" width="25" height="19" viewBox="0 0 25 19"><path d="M12.500 1L24 18H1z" fill="#8b8b8b"/></svg><svg class="i" style="left:1399.5px;top:1246.0px" width="25" height="19" viewBox="0 0 25 19"><path d="M12.500 18L24 1H1z" fill="#8b8b8b"/></svg></div></aside>
</div>
<div id="frame"></div>
</body></html>
